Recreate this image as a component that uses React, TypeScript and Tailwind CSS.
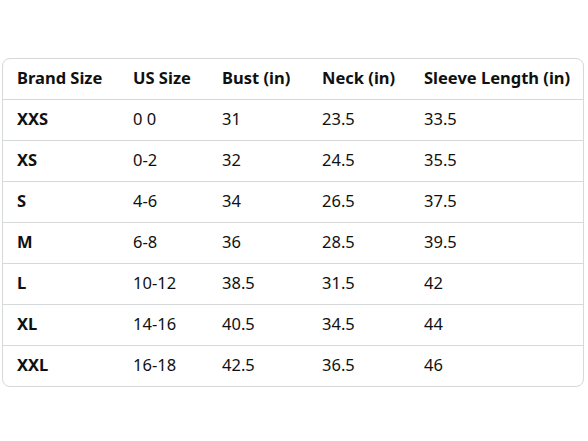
const headers = ['Brand Size', 'US Size', 'Bust (in)', 'Neck (in)', 'Sleeve Length (in)'];

const rows = [
  ['XXS', '0 0', '31', '23.5', '33.5'],
  ['XS', '0-2', '32', '24.5', '35.5'],
  ['S', '4-6', '34', '26.5', '37.5'],
  ['M', '6-8', '36', '28.5', '39.5'],
  ['L', '10-12', '38.5', '31.5', '42'],
  ['XL', '14-16', '40.5', '34.5', '44'],
  ['XXL', '16-18', '42.5', '36.5', '46'],
];

const cols = ['w-[116px]', 'w-[89px]', 'w-[100px]', 'w-[102px]', 'w-auto'];

export default function App() {
  return (
    <div className="w-[588px] h-[441px] bg-white pt-[58px] pl-[2px] pr-[4px] font-['Noto_Sans','Open_Sans',sans-serif] text-[#0f1111]">
      <div className="border border-[#d5d9d9] rounded-[8px] overflow-hidden">
        <table className="w-full border-collapse table-fixed text-[16.5px]">
          <colgroup>
            {cols.map((c, i) => (
              <col key={i} className={c} />
            ))}
          </colgroup>
          <thead>
            <tr className="h-[40px]">
              {headers.map((h) => (
                <th key={h} className="text-left font-bold pl-[14px] whitespace-nowrap">
                  {h}
                </th>
              ))}
            </tr>
          </thead>
          <tbody>
            {rows.map((r) => (
              <tr key={r[0]} className="h-[41px] border-t border-[#d5d9d9]">
                {r.map((v, i) => (
                  <td key={i} className={`pl-[14px] ${i === 0 ? 'font-bold' : 'font-normal'}`}>
                    {v}
                  </td>
                ))}
              </tr>
            ))}
          </tbody>
        </table>
      </div>
    </div>
  );
}
